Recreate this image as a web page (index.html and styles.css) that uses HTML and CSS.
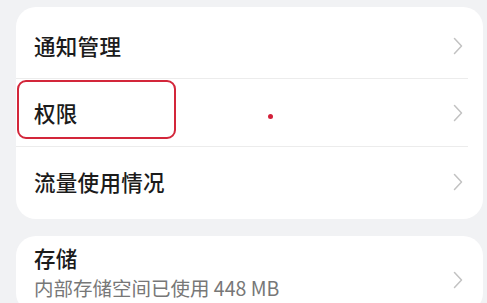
FILE: index.html
```
<!DOCTYPE html>
<html lang="zh-CN">
<head>
<meta charset="utf-8">
<link rel="stylesheet" href="styles.css">
</head>
<body>
<div class="page">
  <div class="card">
    <div class="row first">
      <span class="title">通知管理</span>
      <svg class="chev" viewBox="0 0 10 18"><path d="M1.5 1.5 L8.5 9 L1.5 16.5"/></svg>
    </div>
    <div class="sep"></div>
    <div class="row">
      <span class="title">权限</span>
      <svg class="chev" viewBox="0 0 10 18"><path d="M1.5 1.5 L8.5 9 L1.5 16.5"/></svg>
      <div class="highlight"></div>
      <div class="dot"></div>
    </div>
    <div class="sep"></div>
    <div class="row last">
      <span class="title">流量使用情况</span>
      <svg class="chev" viewBox="0 0 10 18"><path d="M1.5 1.5 L8.5 9 L1.5 16.5"/></svg>
    </div>
  </div>
  <div class="card">
    <div class="row storage">
      <div class="texts">
        <span class="title">存储</span>
        <span class="sub">内部存储空间已使用 448 MB</span>
      </div>
      <svg class="chev" viewBox="0 0 10 18"><path d="M1.5 1.5 L8.5 9 L1.5 16.5"/></svg>
    </div>
  </div>
</div>
</body>
</html>
```
FILE: styles.css
```
html, body {
  margin: 0;
  padding: 0;
  background: #f1f2f4;
  overflow: hidden;
}
body {
  font-family: "Noto Sans CJK SC", "Noto Sans", sans-serif;
  color: #1b1b1b;
}
.page {
  padding: 7px 4px 0 16px;
  display: flex;
  flex-direction: column;
  gap: 17px;
}
.card {
  background: #ffffff;
  border-radius: 20px;
  padding: 4px 0 3px;
}
.row {
  position: relative;
  height: 67px;
  display: flex;
  align-items: center;
  justify-content: space-between;
  padding: 0 20px 0 18px;
}
.row.first {
  height: 67px;
  padding-top: 2px;
  box-sizing: border-box;
}
.row.last {
  height: 69px;
}
.title {
  font-size: 21.5px;
  font-weight: 500;
  line-height: 1;
  letter-spacing: 0.3px;
}
.chev {
  width: 10px;
  height: 18px;
  fill: none;
  stroke: #c2c2c2;
  stroke-width: 1.5;
  stroke-linecap: round;
  stroke-linejoin: round;
}
.sep {
  height: 1px;
  background: #ececec;
  margin: 0 15px 0 0;
}
.highlight {
  position: absolute;
  left: 1px;
  top: 1px;
  width: 155px;
  height: 55px;
  border: 2px solid #d3263a;
  border-radius: 9px;
}
.dot {
  position: absolute;
  left: 252px;
  top: 35px;
  width: 5px;
  height: 5px;
  border-radius: 50%;
  background: #d3203a;
}
.storage {
  height: 70px;
  align-items: flex-start;
  padding-top: 7px;
  box-sizing: border-box;
}
.storage .chev {
  margin-top: 24px;
}
.texts {
  display: flex;
  flex-direction: column;
  gap: 9px;
}
.sub {
  font-size: 19.5px;
  color: #777777;
  line-height: 1;
}
```
